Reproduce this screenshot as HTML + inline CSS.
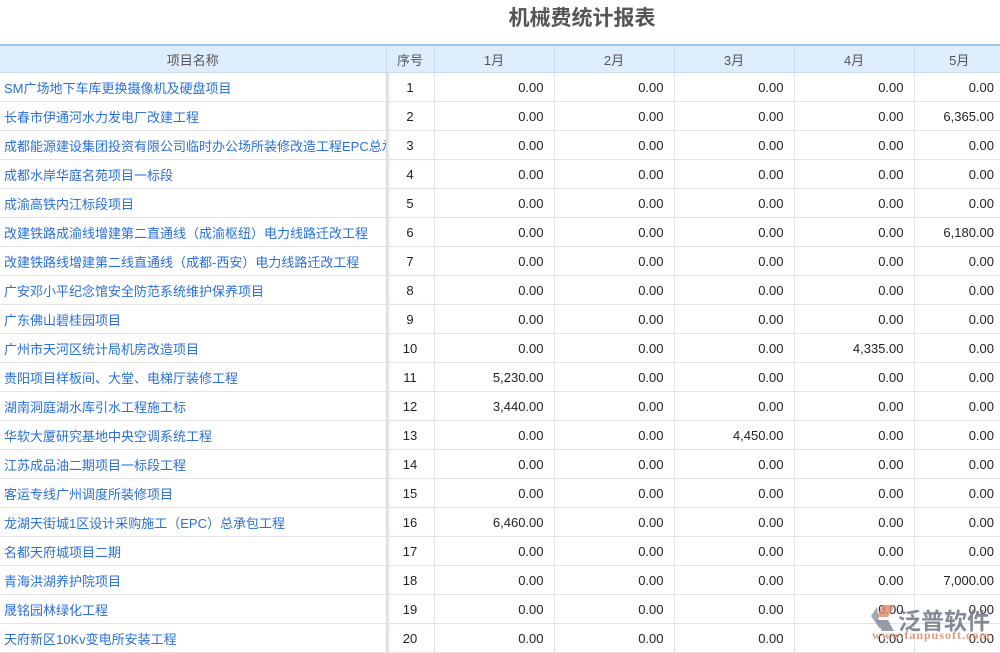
<!DOCTYPE html>
<html><head><meta charset="utf-8"><style>
body{margin:0;width:1000px;height:649px;overflow:hidden;background:#fff;font-family:"Liberation Sans","Noto Sans CJK SC",sans-serif;}
.title{position:absolute;top:5px;left:0;width:1164px;text-align:center;font-size:21px;font-weight:bold;color:#555;line-height:28px;}
table{position:absolute;top:44px;left:0;border-collapse:collapse;table-layout:fixed;width:1004px;}
th{background:#deedfb;color:#555;font-weight:normal;font-size:13px;height:26px;border-top:2px solid #9cc8ef;border-bottom:1px solid #c5ddf3;border-left:1px solid #c5ddf3;padding:0;}
td{height:28px;border-bottom:1px solid #e3e3e3;border-left:1px solid #e3e3e3;font-size:13px;color:#222;padding:0 10px;white-space:nowrap;overflow:hidden;text-align:right;}
td.n{color:#2a6fdc;text-align:left;padding:0 4px;border-left:none;}
td.s{text-align:center;padding:0;border-left:1px solid #ddd;box-shadow:inset 3px 0 3px -2px #ccc;}
th:first-child{border-left:none;}
.logo{position:absolute;left:868px;top:602px;}
</style></head><body>
<div class="title">机械费统计报表</div>
<table>
<colgroup><col style="width:386px"><col style="width:48px"><col style="width:120px"><col style="width:120px"><col style="width:120px"><col style="width:120px"><col style="width:90px"></colgroup>
<tr><th>项目名称</th><th>序号</th><th>1月</th><th>2月</th><th>3月</th><th>4月</th><th>5月</th></tr>
<tr><td class="n">SM广场地下车库更换摄像机及硬盘项目</td><td class="s">1</td><td>0.00</td><td>0.00</td><td>0.00</td><td>0.00</td><td>0.00</td></tr>
<tr><td class="n">长春市伊通河水力发电厂改建工程</td><td class="s">2</td><td>0.00</td><td>0.00</td><td>0.00</td><td>0.00</td><td>6,365.00</td></tr>
<tr><td class="n">成都能源建设集团投资有限公司临时办公场所装修改造工程EPC总承包</td><td class="s">3</td><td>0.00</td><td>0.00</td><td>0.00</td><td>0.00</td><td>0.00</td></tr>
<tr><td class="n">成都水岸华庭名苑项目一标段</td><td class="s">4</td><td>0.00</td><td>0.00</td><td>0.00</td><td>0.00</td><td>0.00</td></tr>
<tr><td class="n">成渝高铁内江标段项目</td><td class="s">5</td><td>0.00</td><td>0.00</td><td>0.00</td><td>0.00</td><td>0.00</td></tr>
<tr><td class="n">改建铁路成渝线增建第二直通线（成渝枢纽）电力线路迁改工程</td><td class="s">6</td><td>0.00</td><td>0.00</td><td>0.00</td><td>0.00</td><td>6,180.00</td></tr>
<tr><td class="n">改建铁路线增建第二线直通线（成都-西安）电力线路迁改工程</td><td class="s">7</td><td>0.00</td><td>0.00</td><td>0.00</td><td>0.00</td><td>0.00</td></tr>
<tr><td class="n">广安邓小平纪念馆安全防范系统维护保养项目</td><td class="s">8</td><td>0.00</td><td>0.00</td><td>0.00</td><td>0.00</td><td>0.00</td></tr>
<tr><td class="n">广东佛山碧桂园项目</td><td class="s">9</td><td>0.00</td><td>0.00</td><td>0.00</td><td>0.00</td><td>0.00</td></tr>
<tr><td class="n">广州市天河区统计局机房改造项目</td><td class="s">10</td><td>0.00</td><td>0.00</td><td>0.00</td><td>4,335.00</td><td>0.00</td></tr>
<tr><td class="n">贵阳项目样板间、大堂、电梯厅装修工程</td><td class="s">11</td><td>5,230.00</td><td>0.00</td><td>0.00</td><td>0.00</td><td>0.00</td></tr>
<tr><td class="n">湖南洞庭湖水库引水工程施工标</td><td class="s">12</td><td>3,440.00</td><td>0.00</td><td>0.00</td><td>0.00</td><td>0.00</td></tr>
<tr><td class="n">华软大厦研究基地中央空调系统工程</td><td class="s">13</td><td>0.00</td><td>0.00</td><td>4,450.00</td><td>0.00</td><td>0.00</td></tr>
<tr><td class="n">江苏成品油二期项目一标段工程</td><td class="s">14</td><td>0.00</td><td>0.00</td><td>0.00</td><td>0.00</td><td>0.00</td></tr>
<tr><td class="n">客运专线广州调度所装修项目</td><td class="s">15</td><td>0.00</td><td>0.00</td><td>0.00</td><td>0.00</td><td>0.00</td></tr>
<tr><td class="n">龙湖天街城1区设计采购施工（EPC）总承包工程</td><td class="s">16</td><td>6,460.00</td><td>0.00</td><td>0.00</td><td>0.00</td><td>0.00</td></tr>
<tr><td class="n">名都天府城项目二期</td><td class="s">17</td><td>0.00</td><td>0.00</td><td>0.00</td><td>0.00</td><td>0.00</td></tr>
<tr><td class="n">青海洪湖养护院项目</td><td class="s">18</td><td>0.00</td><td>0.00</td><td>0.00</td><td>0.00</td><td>7,000.00</td></tr>
<tr><td class="n">晟铭园林绿化工程</td><td class="s">19</td><td>0.00</td><td>0.00</td><td>0.00</td><td>0.00</td><td>0.00</td></tr>
<tr><td class="n">天府新区10Kv变电所安装工程</td><td class="s">20</td><td>0.00</td><td>0.00</td><td>0.00</td><td>0.00</td><td>0.00</td></tr>
</table>
<div class="logo">
<svg width="40" height="40" style="position:absolute;left:0;top:0">
<path d="M14 3 L27 3 L20 15 L9 15 Z" fill="#e08a6a" opacity="0.8"/>
<path d="M8 18 L20 18 L26 29 L14 29 Z" fill="#7a8494" opacity="0.8"/>
<path d="M3 14 L9 5 L12 27 Z" fill="#7a8494" opacity="0.7"/>
</svg>
<div style="position:absolute;left:30px;top:0;font-size:23px;font-weight:bold;color:#6d7685;opacity:.85;white-space:nowrap;letter-spacing:0px">泛普软件</div>
<div style="position:absolute;left:4px;top:26px;font-size:12px;font-weight:bold;color:#e09a80;white-space:nowrap;letter-spacing:1px;font-family:'Liberation Serif',serif">www.fanpusoft.com</div>
</div>
</body></html>
